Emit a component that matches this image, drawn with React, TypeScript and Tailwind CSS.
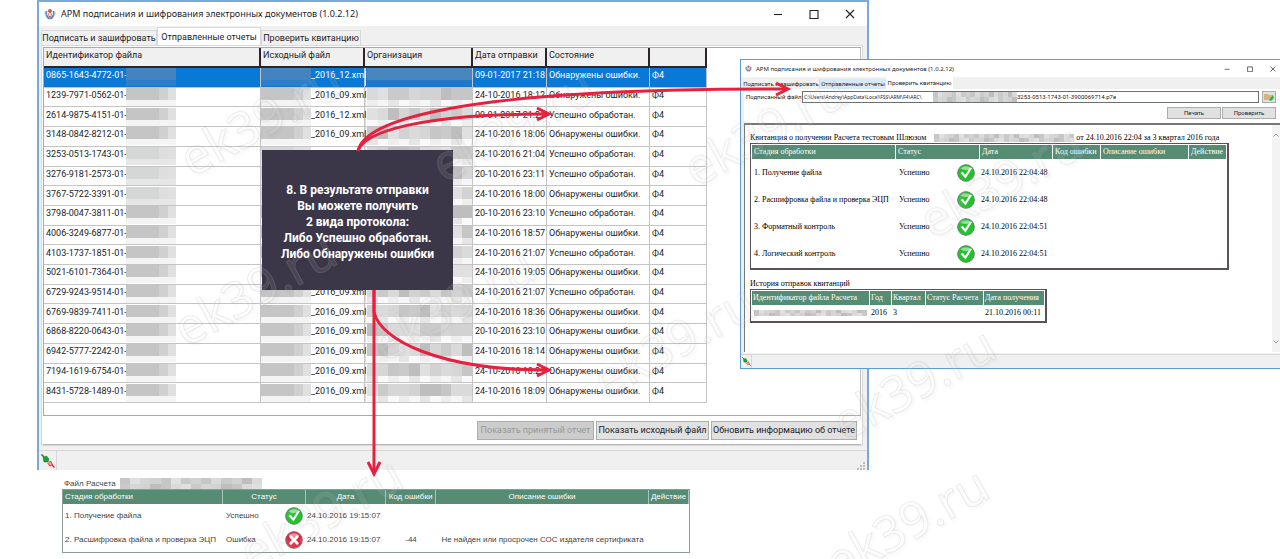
import { ReactNode } from 'react'
import clsx from 'clsx'

interface Report {
  id: string
  file: string
  date: string
  ok: boolean
}

const reports: Report[] = [
  { id: '0865-1643-4772-01-', file: '_2016_12.xml', date: '09-01-2017 21:18', ok: false },
  { id: '1239-7971-0562-01-', file: '_2016_09.xml', date: '24-10-2016 18:12', ok: false },
  { id: '2614-9875-4151-01-', file: '_2016_12.xml', date: '09-01-2017 21:21', ok: true },
  { id: '3148-0842-8212-01-', file: '_2016_09.xml', date: '24-10-2016 18:06', ok: false },
  { id: '3253-0513-1743-01-', file: '_2016_09.xml', date: '24-10-2016 21:04', ok: true },
  { id: '3276-9181-2573-01-', file: '_2016_09.xml', date: '20-10-2016 23:11', ok: true },
  { id: '3767-5722-3391-01-', file: '_2016_09.xml', date: '24-10-2016 18:00', ok: false },
  { id: '3798-0047-3811-01-', file: '_2016_09.xml', date: '20-10-2016 23:10', ok: true },
  { id: '4006-3249-6877-01-', file: '_2016_09.xml', date: '24-10-2016 18:57', ok: false },
  { id: '4103-1737-1851-01-', file: '_2016_09.xml', date: '24-10-2016 21:07', ok: true },
  { id: '5021-6101-7364-01-', file: '_2016_09.xml', date: '24-10-2016 19:05', ok: false },
  { id: '6729-9243-9514-01-', file: '_2016_09.xml', date: '24-10-2016 21:07', ok: true },
  { id: '6769-9839-7411-01-', file: '_2016_09.xml', date: '24-10-2016 18:36', ok: false },
  { id: '6868-8220-0643-01-', file: '_2016_09.xml', date: '20-10-2016 23:10', ok: false },
  { id: '6942-5777-2242-01-', file: '_2016_09.xml', date: '24-10-2016 18:14', ok: false },
  { id: '7194-1619-6754-01-', file: '_2016_09.xml', date: '24-10-2016 18:21', ok: false },
  { id: '8431-5728-1489-01-', file: '_2016_09.xml', date: '24-10-2016 18:09', ok: false },
]

const stages = [
  { name: '1. Получение файла', date: '24.10.2016 22:04:48' },
  { name: '2. Расшифровка файла и проверка ЭЦП', date: '24.10.2016 22:04:48' },
  { name: '3. Форматный контроль', date: '24.10.2016 22:04:51' },
  { name: '4. Логический контроль', date: '24.10.2016 22:04:51' },
]

const shades = [
  'bg-[#c6c6c6]',
  'bg-[#d2d2d2]',
  'bg-[#cacaca]',
  'bg-[#dadada]',
  'bg-[#bebebe]',
  'bg-[#d6d6d6]',
  'bg-[#e0e0e0]',
]
const lightShades = ['bg-[#f6f6f6]', 'bg-[#eeeeee]', 'bg-[#f9f9f9]', 'bg-[#e6e6e6]']

const watermarks = [
  [192, 178],
  [444, 184],
  [696, 188],
  [932, 240],
  [186, 348],
  [384, 363],
  [605, 400],
  [845, 442],
  [252, 572],
  [838, 582],
]

// blurred-out part of an id, two tones per row
function IdMask({ selected, row }: { selected: boolean; row: number }) {
  const soft = row > 3 && row < 7
  return (
    <span className="z-10 flex h-full w-[50px] shrink-0 flex-col">
      <span className={clsx('flex h-[12px]', selected && 'opacity-90')}>
        <span className={clsx('flex-[4]', selected ? 'bg-[#4a86be]' : soft ? 'bg-[#d5d6d6]' : 'bg-[#c5c5c5]')} />
        <span className={clsx('flex-1', selected ? 'bg-[#4a86be]' : soft ? 'bg-[#dedede]' : 'bg-[#d0d0d0]')} />
        <span className={clsx('flex-1', selected ? 'bg-[#4a86be]' : 'bg-[#e0e0e0]')} />
      </span>
      <span className={clsx('flex-1', selected ? 'bg-[#2f7fc8]' : soft ? 'bg-[#e6e6e6]' : 'bg-[#f4f4f4]')} />
    </span>
  )
}

function OrgMask({ selected, row }: { selected: boolean; row: number }) {
  return (
    <span className="flex h-full flex-col">
      <span className="flex h-[12px]">
        {Array.from({ length: 10 }, (_, i) => (
          <span key={i} className={clsx('flex-1', selected ? 'bg-[#4a86be]' : shades[(row * 3 + i * 2 + ((row * i) % 3)) % 7])} />
        ))}
      </span>
      <span className="flex flex-1">
        {Array.from({ length: 10 }, (_, i) => (
          <span key={i} className={clsx('flex-1', selected ? 'bg-[#2377c8]' : lightShades[(row + i * 3) % 4])} />
        ))}
      </span>
    </span>
  )
}

function Mosaic({ cells, className }: { cells: number; className: string }) {
  return (
    <span className={clsx('flex shrink-0', className)}>
      {Array.from({ length: cells }, (_, i) => (
        <span key={i} className="flex flex-1 flex-col">
          <span className={clsx('flex-1', shades[(i * 5 + (i % 3)) % 7])} />
          <span className={clsx('flex-1', shades[(i * 3 + 2) % 7])} />
        </span>
      ))}
    </span>
  )
}

function AppIcon({ className }: { className: string }) {
  return (
    <svg viewBox="0 0 12 12" className={className} aria-hidden="true">
      <path d="M2.500 3C1.500 6 3 9.500 5.500 11M9.500 3c1 3-.5 6.500-3 8" fill="none" stroke="#4d86bd" strokeWidth="1.800" />
      <path d="M.2 5h2.300M9.500 5h2.300M.8 7h2M9.200 7h2" stroke="#8db4dc" strokeWidth="1.200" />
      <circle cx="6" cy="3" r="2" fill="#d9593d" />
      <path d="M4 5.500h4L7.300 9 6 10.500 4.700 9z" fill="#c96b55" />
      <path d="M5 5.500h2V8H5z" fill="#f3d9d0" />
    </svg>
  )
}

function PlugIcon({ className }: { className: string }) {
  return (
    <svg viewBox="0 0 14 14" className={className} aria-hidden="true">
      <path d="M.5.500l2.500 2.500" stroke="#356b3c" strokeWidth="1.500" />
      <path d="M2 3.500L5.500 2l2.500 3-1 3-4 0z" fill="#16a52e" stroke="#146b22" strokeWidth=".5" />
      <path d="M7 9.500L9.500 7l2 3.500L9 12z" fill="#f9a0a0" stroke="#d22" strokeWidth=".9" />
      <path d="M11 11l2.500 2.500" stroke="#d22" strokeWidth="1.200" />
    </svg>
  )
}

function StatusIcon({ ok }: { ok: boolean }) {
  return (
    <svg viewBox="0 0 18 18" className="h-[18px] w-[18px] shrink-0" role="img" aria-label={ok ? 'ok' : 'error'}>
      <circle cx="9" cy="9" r="8.300" fill={ok ? '#1fc42a' : '#e3203c'} stroke={ok ? '#5f8064' : '#8d6068'} strokeWidth="1" />
      <path d="M3.500 4.500a7 6 0 0 1 11 0Q9 8 3.500 4.500z" fill="#fff" opacity=".5" />
      {ok ? (
        <path d="M3.500 9l2.500-1.200 2 3.200L13 3.500l2 .8-6.500 10.200z" fill="#fff" />
      ) : (
        <path d="M5.800 5.800l6.400 6.400M12.200 5.800l-6.400 6.400" stroke="#fff" strokeWidth="3" strokeLinecap="round" />
      )}
    </svg>
  )
}

function WindowButtons({ className }: { className: string }) {
  const items = [
    { label: 'Свернуть', d: 'M1 5.500h8' },
    { label: 'Развернуть', d: 'M1 1.500h8v8h-8z' },
    { label: 'Закрыть', d: 'M1 1l8 8M9 1L1 9' },
  ]
  return (
    <div className={clsx('ml-auto flex', className)}>
      {items.map((item) => (
        <button key={item.label} type="button" aria-label={item.label} className="block aspect-square h-full">
          <svg viewBox="0 0 10 10" className="h-full w-full" fill="none" stroke="#222" strokeWidth="1.100">
            <path d={item.d} />
          </svg>
        </button>
      ))}
    </div>
  )
}

function Th({ children, className }: { children?: ReactNode; className?: string }) {
  return <th className={clsx('bg-[#568b74] font-normal text-white', className)}>{children}</th>
}

function ReportsWindow() {
  const head = 'border-r-2 border-b-2 border-[#2b2528] bg-[#f0f0f0] px-[2px] pb-[4px] text-left font-normal'
  const cell = 'border-r border-b border-[#c4c4c4] p-0'
  const button = 'h-[19px] border border-[#adadad] text-center'
  return (
    <section className="absolute top-0 left-[37px] flex h-[470px] w-[65%] flex-col border-x-2 border-t-2 border-[#78a9d8] bg-[#f0f0f0] font-[Roboto,sans-serif] text-[9px] leading-[14px] text-[#1c1c28]">
      <header className="flex h-[24px] items-center bg-white pl-[5px]">
        <AppIcon className="h-[12px] w-[12px]" />
        <h1 className="ml-[5px] font-['Noto_Sans',sans-serif]">АРМ подписания и шифрования электронных документов (1.0.2.12)</h1>
        <WindowButtons className="mr-[12px] h-[10px] gap-[26px]" />
      </header>
      <nav className="flex h-[19px] items-end pl-[2px] whitespace-nowrap">
        <button type="button" className="h-[15px] w-[116px] border border-b-0 border-[#d9d9d9]">Подписать и зашифровать</button>
        <button type="button" className="h-[18px] w-[104px] border border-b-0 border-[#d9d9d9] bg-white">Отправленные отчеты</button>
        <button type="button" className="h-[15px] w-[100px] border border-b-0 border-[#d9d9d9]">Проверить квитанцию</button>
      </nav>
      <div className="mr-[4px] ml-[2px] flex h-[401px] flex-col border border-[#d9d9d9] bg-white px-[1px] pt-[1px]">
        <div className="h-[369px] border border-[#a9a9a9] border-r-[#c0c0c0]">
          <table className="h-[355px] w-[663px] table-fixed border-separate border-spacing-0 whitespace-nowrap">
            <colgroup>
              <col className="w-[217px]" />
              <col className="w-[104px]" />
              <col className="w-[108px]" />
              <col className="w-[74px]" />
              <col className="w-[103px]" />
              <col className="w-[57px]" />
            </colgroup>
            <thead>
              <tr className="h-[20px]">
                {['Идентификатор файла', 'Исходный файл', 'Организация', 'Дата отправки', 'Состояние', ''].map((t) => (
                  <th key={t} className={head}>{t}</th>
                ))}
              </tr>
            </thead>
            <tbody>
              {reports.map((r, i) => (
                <tr key={r.id} className={clsx(i === 0 && 'bg-[#0a78d6] text-white')}>
                  <td className={cell}>
                    <div className="flex h-[18px]">
                      <span className="w-[82px] pl-[2px]">{r.id}</span>
                      <IdMask selected={i === 0} row={i} />
                    </div>
                  </td>
                  <td className={cell}>
                    <div className="flex h-[18px]">
                      <IdMask selected={i === 0} row={i} />
                      <span>{r.file}</span>
                    </div>
                  </td>
                  <td className={cell}>
                    <div className="h-[18px] border-l border-[#eadfb8] pl-[1px]">
                      <OrgMask selected={i === 0} row={i} />
                    </div>
                  </td>
                  <td className={cell}>
                    <div className="h-[18px] pl-[2px]">{r.date}</div>
                  </td>
                  <td className={cell}>
                    <div className="h-[18px] pl-[2px]">{r.ok ? 'Успешно обработан.' : 'Обнаружены ошибки.'}</div>
                  </td>
                  <td className={cell}>
                    <div className="h-[18px] pl-[2px]">Ф4</div>
                  </td>
                </tr>
              ))}
            </tbody>
          </table>
        </div>
        <div className="flex flex-1 items-center justify-end gap-[2px] border-b border-[#b5b5b5] pr-[4px] whitespace-nowrap">
          <button type="button" disabled className={clsx(button, 'w-[117px] bg-[#cccccc] text-[#949a94]')}>Показать принятый отчет</button>
          <button type="button" className={clsx(button, 'w-[113px] bg-[#e1e1e1]')}>Показать исходный файл</button>
          <button type="button" className={clsx(button, 'w-[146px] bg-[#e1e1e1]')}>Обновить информацию об отчете</button>
        </div>
      </div>
      <footer className="mt-[4px] flex flex-1 items-center justify-between border-t border-[#d7d7d7]">
        <span className="flex h-full w-[18px] items-center border-r border-[#d7d7d7] pl-[2px]">
          <PlugIcon className="h-[14px] w-[14px]" />
        </span>
        <svg viewBox="0 0 8 8" className="mr-[2px] h-[8px] w-[8px] self-end" fill="#bdbdbd" aria-hidden="true">
          <path d="M6 0h2v2H6zM3 3h2v2H3zM6 3h2v2H6zM0 6h2v2H0zM3 6h2v2H3zM6 6h2v2H6z" />
        </svg>
      </footer>
    </section>
  )
}

function ReceiptWindow() {
  const button = 'h-[12px] w-[54px] border border-[#adadad] bg-[#e1e1e1]'
  return (
    <section className="absolute top-[59px] right-0 left-[740px] flex h-[310px] flex-col border border-r-0 border-[#5d9dd5] bg-[#f0f0f0] font-[Roboto,sans-serif] text-[6px] leading-[10px] whitespace-nowrap text-[#1c1c28]">
      <header className="flex h-[17px] items-center bg-white pl-[4px]">
        <AppIcon className="h-[7px] w-[7px]" />
        <h2 className="ml-[4px] font-['Noto_Sans',sans-serif]">АРМ подписания и шифрования электронных документов (1.0.2.12)</h2>
        <WindowButtons className="mr-[4px] h-[6px] gap-[17px]" />
      </header>
      <nav className="flex h-[12px] items-end pl-[2px]">
        <button type="button" className="h-[10px] w-[77px] border-r border-[#d9d9d9]">Подписать и зашифровать</button>
        <button type="button" className="h-[10px] w-[66px] bg-[#d8eaf9]">Отправленные отчеты</button>
        <button type="button" className="h-[12px] w-[67px] bg-white">Проверить квитанцию</button>
      </nav>
      <div className="ml-[3px] flex flex-1 flex-col bg-white">
        <div className="mt-[2px] mr-[4px] flex h-[12px] items-center">
          <label htmlFor="signed" className="w-[58px] pl-[2px]">Подписанный файл</label>
          <div className="flex h-[12px] flex-1 items-center border border-[#6a706c]">
            <input
              id="signed"
              readOnly
              defaultValue="C:\Users\Andrey\AppData\Local\FSS\ARM\F4\ARC\"
              className="h-[10px] w-[130px] pl-[1px] font-['Noto_Sans',sans-serif] text-[5px] outline-none"
            />
            <Mosaic cells={18} className="h-[10px] w-[84px]" />
            <input aria-label="Имя файла" readOnly defaultValue="3253-0513-1743-01-3900069714.p7e" className="h-[10px] min-w-0 flex-1 outline-none" />
          </div>
          <button type="button" aria-label="Обзор" className="ml-[3px] flex h-[12px] w-[14px] items-center justify-center border border-[#adadad] bg-[#e1e1e1]">
            <svg viewBox="0 0 10 8" className="h-[8px] w-[10px]" aria-hidden="true">
              <path d="M0 1h4l1 1h4v5H0z" fill="#d9b184" />
              <path d="M5 7l4-5 1 3-3 3z" fill="#25b83a" />
            </svg>
          </button>
        </div>
        <div className="mt-[4px] mr-[4px] flex justify-end gap-[1px]">
          <button type="button" className={button}>Печать</button>
          <button type="button" className={button}>Проверить</button>
        </div>
        <div className="mt-[4px] flex h-[229px] border-t-2 border-l border-[#777]">
          <div className="flex-1 pt-[8px] pl-[5px] font-['Liberation_Serif',serif] text-[8px] text-black">
            <p className="flex h-[10px] items-center">
              Квитанция о получении Расчета тестовым Шлюзом
              <Mosaic cells={28} className="mr-[2px] ml-[8px] h-[8px] w-[140px]" />
              от 24.10.2016 22:04 за 3 квартал 2016 года
            </p>
            <table className="w-[478px] table-fixed border-separate border border-r-2 border-b-2 border-[#5a5256] [border-spacing:1px]">
              <colgroup>
                <col className="w-[143px]" />
                <col className="w-[83px]" />
                <col className="w-[72px]" />
                <col className="w-[47px]" />
                <col className="w-[87px]" />
                <col className="w-[37px]" />
              </colgroup>
              <thead>
                <tr className="h-[14px] text-left">
                  {['Стадия обработки', 'Статус', 'Дата', 'Код ошибки', 'Описание ошибки', 'Действие'].map((t) => (
                    <Th key={t} className="p-0 pl-[2px]">{t}</Th>
                  ))}
                </tr>
              </thead>
              <tbody>
                {stages.map((s) => (
                  <tr key={s.name} className="h-[26px]">
                    <td className="p-0 pl-[2px]">{s.name}</td>
                    <td className="p-0 pl-[3px]">
                      <div className="flex items-center justify-between pr-[4px]">
                        Успешно
                        <StatusIcon ok />
                      </div>
                    </td>
                    <td className="p-0 pl-[1px]">{s.date}</td>
                    <td />
                    <td />
                    <td />
                  </tr>
                ))}
              </tbody>
            </table>
            <p className="mt-[9px]">История отправок квитанций</p>
            <table className="w-[297px] table-fixed border-separate border border-r-2 border-b-2 border-[#5a5256] [border-spacing:1px]">
              <colgroup>
                <col className="w-[117px]" />
                <col className="w-[21px]" />
                <col className="w-[33px]" />
                <col className="w-[57px]" />
                <col className="w-[60px]" />
              </colgroup>
              <thead>
                <tr className="h-[14px] text-left">
                  {['Идентификатор файла Расчета', 'Год', 'Квартал', 'Статус Расчета', 'Дата получения'].map((t) => (
                    <Th key={t} className="p-0 pl-[1px]">{t}</Th>
                  ))}
                </tr>
              </thead>
              <tbody>
                <tr className="h-[14px]">
                  <td className="p-0 pl-[2px]">
                    <Mosaic cells={22} className="h-[6px] w-[113px]" />
                  </td>
                  <td className="p-0 pl-[1px]">2016</td>
                  <td className="p-0 pl-[1px]">3</td>
                  <td />
                  <td className="p-0 pl-[1px]">21.10.2016 00:11</td>
                </tr>
              </tbody>
            </table>
          </div>
          <div className="flex w-[8px] flex-col justify-between bg-[#f3f3f3] py-[6px]">
            <svg viewBox="0 0 8 8" className="h-[8px] w-[8px]" fill="none" stroke="#999" aria-hidden="true">
              <path d="M1.500 5.500L4 3l2.500 2.500" />
            </svg>
            <svg viewBox="0 0 8 8" className="h-[8px] w-[8px]" fill="none" stroke="#999" aria-hidden="true">
              <path d="M1.500 2.500L4 5l2.500-2.500" />
            </svg>
          </div>
        </div>
      </div>
      <footer className="mt-[1px] flex h-[14px] items-center border-t border-[#d7d7d7]">
        <span className="flex h-full w-[11px] items-center border-r border-[#d7d7d7] pl-[1px]">
          <PlugIcon className="h-[9px] w-[9px]" />
        </span>
      </footer>
    </section>
  )
}

function ErrorReport() {
  return (
    <section className="absolute top-[478px] left-[62px] w-[628px] font-['Liberation_Sans',sans-serif] text-[8px] leading-[10px] whitespace-nowrap text-[#444]">
      <p className="flex h-[11px] items-center pl-[2px]">
        <span className="w-[56px]">Файл Расчета</span>
        <Mosaic cells={14} className="h-[11px] w-[142px]" />
      </p>
      <table className="w-full table-fixed border-separate border-spacing-0 border border-[#8f9a95] bg-white">
        <colgroup>
          <col className="w-[160px]" />
          <col className="w-[83px]" />
          <col className="w-[80px]" />
          <col className="w-[50px]" />
          <col className="w-[213px]" />
          <col />
        </colgroup>
        <thead>
          <tr className="h-[14px]">
            {['Стадия обработки', 'Статус', 'Дата', 'Код ошибки', 'Описание ошибки', 'Действие'].map((t, i) => (
              <Th key={t} className={clsx('border-r border-[#a9c5b9] p-0', i === 0 ? 'pl-[2px] text-left' : 'text-center')}>{t}</Th>
            ))}
          </tr>
        </thead>
        <tbody>
          <tr className="h-[24px]">
            <td className="p-0 pl-[2px]">1. Получение файла</td>
            <td className="p-0 pl-[3px]">
              <div className="flex items-center justify-between pr-[3px]">
                Успешно
                <StatusIcon ok />
              </div>
            </td>
            <td className="p-0 pl-[1px]">24.10.2016 19:15:07</td>
            <td />
            <td />
            <td />
          </tr>
          <tr className="h-[24px]">
            <td className="p-0 pl-[2px]">2. Расшифровка файла и проверка ЭЦП</td>
            <td className="p-0 pl-[3px]">
              <div className="flex items-center justify-between pr-[3px]">
                Ошибка
                <StatusIcon ok={false} />
              </div>
            </td>
            <td className="p-0 pl-[1px]">24.10.2016 19:15:07</td>
            <td className="p-0 text-center">-44</td>
            <td className="p-0 text-center">Не найден или просрочен СОС издателя сертификата</td>
            <td />
          </tr>
        </tbody>
      </table>
    </section>
  )
}

export default function App() {
  return (
    <main className="relative min-h-screen overflow-hidden bg-white">
      <ReportsWindow />
      <ReceiptWindow />
      <ErrorReport />
      <aside className="absolute top-[150px] left-[262px] z-20 flex h-[140px] w-[191px] flex-col items-center justify-center bg-[#3c3748] pt-[4px] text-center font-[Roboto,sans-serif] text-[12px] leading-[16px] font-bold whitespace-nowrap text-white">
        <p>8. В результате отправки</p>
        <p>Вы можете получить</p>
        <p>2 вида протокола:</p>
        <p>Либо Успешно обработан.</p>
        <p>Либо Обнаружены ошибки</p>
      </aside>
      <svg width="1280" height="559" viewBox="0 0 1280 559" className="pointer-events-none absolute top-0 left-0 z-30" aria-hidden="true">
        <g fontFamily="Noto Sans, sans-serif" fontSize="50" fill="#fff" fillOpacity=".08" stroke="#aaa" strokeOpacity=".22" className="drop-shadow-[2px_2px_1px_rgba(0,0,0,0.15)]">
          {watermarks.map(([x, y]) => (
            <text key={`${x}-${y}`} transform={`translate(${x} ${y}) rotate(-29)`}>ek39.ru</text>
          ))}
        </g>
        <g fill="none" stroke="#e8203f" strokeWidth="3">
          <path d="M358 151C364 122 450 88 786 89" />
          <path d="M358 151C364 132 420 114 546 114" />
          <path d="M374 290V472" />
          <path d="M374 290V312C380 340 440 370 546 370" />
          <path d="M776 83l12 6-12 6M537 108l12 6-12 6M537 364l12 6-12 6M368 462l6 12 6-12" />
        </g>
      </svg>
    </main>
  )
}
